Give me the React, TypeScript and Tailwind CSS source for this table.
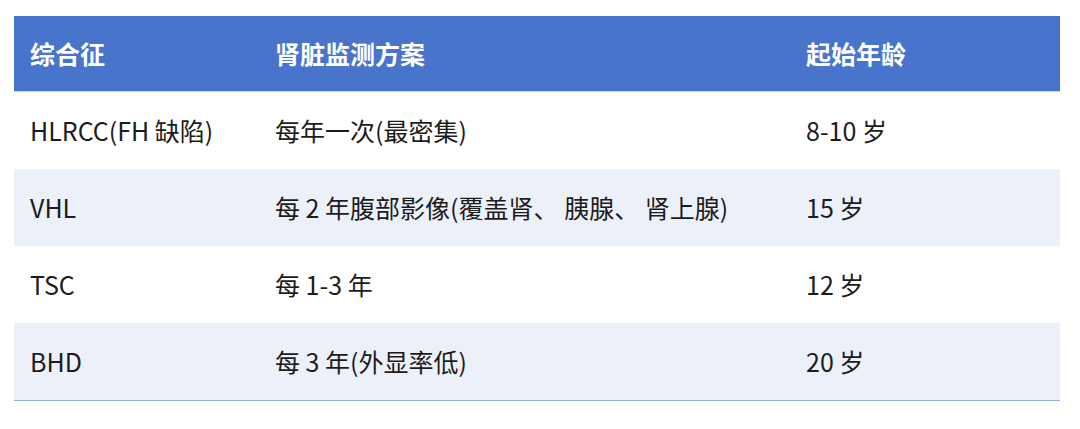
import React from 'react';

interface Row {
  syndrome: string;
  plan: string;
  age: string;
}

const rows: Row[] = [
  { syndrome: 'HLRCC(FH 缺陷)', plan: '每年一次(最密集)', age: '8-10 岁' },
  { syndrome: 'VHL', plan: '每 2 年腹部影像(覆盖肾、 胰腺、 肾上腺)', age: '15 岁' },
  { syndrome: 'TSC', plan: '每 1-3 年', age: '12 岁' },
  { syndrome: 'BHD', plan: '每 3 年(外显率低)', age: '20 岁' },
];

export default function App() {
  return (
    <div
      className="w-[1080px] h-[429px] bg-white pt-4 pl-[14px]"
      style={{ fontFamily: '"Noto Sans CJK SC", "Noto Sans", sans-serif' }}
    >
      <div className="w-[1046px] border-b border-[#8fb0e6]">
        {/* header */}
        <div className="grid grid-cols-[245px_531px_270px] h-[76px] items-center bg-[#4874cb] text-white font-bold text-[25px] border-b border-[#c5d5f0]">
          <div className="pl-4">综合征</div>
          <div className="pl-4">肾脏监测方案</div>
          <div className="pl-4">起始年龄</div>
        </div>

        {rows.map((row, i) => (
          <div
            key={row.syndrome}
            className={`grid grid-cols-[245px_531px_270px] h-[77px] items-center text-[25px] text-[#1c1c1c] ${
              i % 2 === 1 ? 'bg-[#ecf0f9]' : 'bg-white'
            }`}
          >
            <div className="pl-4 whitespace-pre">{row.syndrome}</div>
            <div className="pl-4 whitespace-pre">{row.plan}</div>
            <div className="pl-4 whitespace-pre">{row.age}</div>
          </div>
        ))}
      </div>
    </div>
  );
}
